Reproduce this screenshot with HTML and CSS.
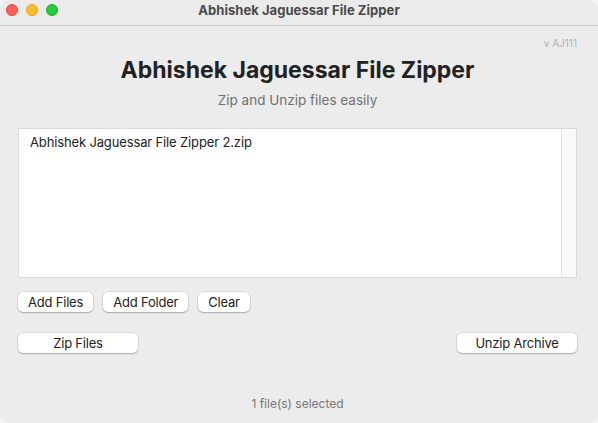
FILE: index.html
```html
<!DOCTYPE html>
<html>
<head>
<meta charset="utf-8">
<link rel="stylesheet" href="styles.css">
</head>
<body>
<div class="window">
  <div class="titlebar">
    <div class="lights">
      <span class="light red"></span>
      <span class="light yellow"></span>
      <span class="light green"></span>
    </div>
    <div class="wtitle">Abhishek Jaguessar File Zipper</div>
  </div>
  <div class="content">
    <div class="version">v AJ111</div>
    <h1 class="title">Abhishek Jaguessar File Zipper</h1>
    <p class="subtitle">Zip and Unzip files easily</p>
    <div class="list">
      <div class="items">
        <div class="item">Abhishek Jaguessar File Zipper 2.zip</div>
      </div>
      <div class="scroll"></div>
    </div>
    <div class="row">
      <button class="btn">Add Files</button>
      <button class="btn">Add Folder</button>
      <button class="btn">Clear</button>
    </div>
    <div class="row2">
      <button class="btn wide">Zip Files</button>
      <button class="btn wide">Unzip Archive</button>
    </div>
    <div class="status">1 file(s) selected</div>
  </div>
</div>
</body>
</html>
```
FILE: styles.css
```css
html, body {
  margin: 0;
  padding: 0;
  background: #f4f4f4;
}
body {
  width: 598px;
  height: 423px;
  overflow: hidden;
  font-family: Inter, "Liberation Sans", Arial, sans-serif;
}
.window {
  width: 598px;
  height: 423px;
  background: #ececec;
  border-radius: 10px;
  overflow: hidden;
  display: flex;
  flex-direction: column;
}
.titlebar {
  height: 25px;
  border-bottom: 1px solid #cfcfcf;
  background: #ebebeb;
  display: flex;
  align-items: center;
  justify-content: center;
  position: relative;
}
.lights {
  position: absolute;
  left: 6px;
  top: 4px;
  display: flex;
  gap: 8px;
}
.light {
  width: 12px;
  height: 12px;
  border-radius: 50%;
  box-sizing: border-box;
}
.red { background: #fe5f57; border: 0.5px solid #e2463f; }
.yellow { background: #febc2e; border: 0.5px solid #e1a116; }
.green { background: #28c840; border: 0.5px solid #14ae2c; }
.wtitle {
  font-size: 13px;
  font-weight: 700;
  color: #4a4a4a;
  margin-top: -5px;
  letter-spacing: 0.05px;
}
.content {
  display: flex;
  flex-direction: column;
  padding: 0 21px 0 18px;
}
.version {
  margin-top: 11px;
  font-size: 10px;
  line-height: 12px;
  color: #b2b2b2;
  text-align: right;
}
.title {
  margin: 8px 0 0 0;
  font-size: 23px;
  line-height: 26px;
  font-weight: 700;
  color: #222;
  text-align: center;
}
.subtitle {
  margin: 9px 0 0 0;
  font-size: 13.5px;
  line-height: 16px;
  color: #707070;
  text-align: center;
}
.list {
  margin-top: 20px;
  height: 150px;
  box-sizing: border-box;
  border: 1px solid #dadada;
  background: #fff;
  display: flex;
}
.items {
  flex: 1;
  padding: 5px 11px;
}
.item {
  font-size: 13px;
  line-height: 16px;
  color: #222;
  letter-spacing: -0.14px;
}
.scroll {
  width: 14px;
  background: #fafafa;
  border-left: 1px solid #e3e3e3;
}
.row {
  margin-top: 14px;
  display: flex;
  gap: 10px;
}
.row2 {
  margin-top: 21px;
  display: flex;
  justify-content: space-between;
}
.btn {
  height: 20px;
  padding: 0 10px;
  border: none;
  border-radius: 5px;
  background: #fff;
  box-shadow: 0 0 0 0.5px rgba(0,0,0,0.14), 0 1px 1.5px rgba(0,0,0,0.22);
  font-family: Inter, "Liberation Sans", Arial, sans-serif;
  font-size: 13px;
  color: #222;
  line-height: 20px;
  letter-spacing: -0.2px;
}
.wide {
  width: 120px;
}
.status {
  margin-top: 44px;
  font-size: 12px;
  line-height: 14px;
  color: #777;
  text-align: center;
}
```
